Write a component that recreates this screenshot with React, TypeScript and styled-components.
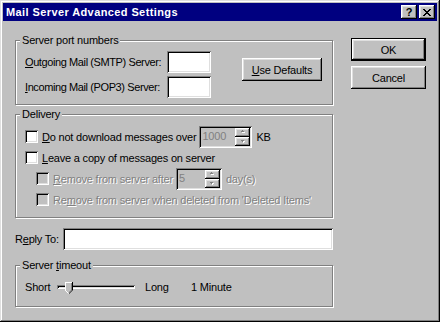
import styled, { createGlobalStyle } from "styled-components";

const GlobalStyle = createGlobalStyle`
  html, body {
    margin: 0;
    padding: 0;
    background: #c0c0c0;
  }
  body {
    font-family: "Liberation Sans", Arial, sans-serif;
    font-size: 11px;
    letter-spacing: -0.2px;
    color: #000;
  }
`;

const raised = `
  box-shadow: inset -1px -1px #000, inset 1px 1px #fff, inset -2px -2px #808080, inset 2px 2px #dfdfdf;
`;

const sunken = `
  box-shadow: inset 1px 1px #808080, inset -1px -1px #fff, inset 2px 2px #000, inset -2px -2px #dfdfdf;
`;

const Window = styled.div`
  width: 440px;
  height: 322px;
  box-sizing: border-box;
  padding: 3px;
  background: #c0c0c0;
  box-shadow: inset -1px -1px #000, inset 1px 1px #dfdfdf, inset -2px -2px #808080, inset 2px 2px #fff;
  display: flex;
  flex-direction: column;
`;

const TitleBar = styled.div`
  height: 18px;
  background: #000080;
  color: #fff;
  display: flex;
  align-items: center;
  padding: 0 2px 0 3px;
`;

const Title = styled.span`
  flex: 1;
  font-weight: bold;
  font-size: 11px;
  letter-spacing: 0.4px;
`;

const TitleButton = styled.div`
  width: 16px;
  height: 14px;
  box-sizing: border-box;
  background: #c0c0c0;
  ${raised}
  color: #000;
  font-weight: bold;
  font-size: 11px;
  letter-spacing: 0;
  line-height: 13px;
  display: flex;
  align-items: center;
  justify-content: center;
  & + & {
    margin-left: 2px;
  }
`;

const Body = styled.div`
  display: flex;
  padding-left: 12px;
`;

const LeftColumn = styled.div`
  width: 318px;
  padding-top: 19px;
  display: flex;
  flex-direction: column;
`;

const RightColumn = styled.div`
  margin-left: 18px;
  padding-top: 17px;
  display: flex;
  flex-direction: column;
  gap: 5px;
`;

const Group = styled.div<{ $h: number; $gap?: number }>`
  height: ${(p) => p.$h}px;
  box-sizing: border-box;
  margin-top: ${(p) => p.$gap ?? 0}px;
  border: 1px solid #808080;
  box-shadow: inset 1px 1px #fff, 1px 1px #fff;
  padding: 0 9px;
  display: flex;
  flex-direction: column;
`;

const Legend = styled.div`
  align-self: flex-start;
  margin: -7px 0 0 -5px;
  padding: 0 2px;
  background: #c0c0c0;
  line-height: 13px;
`;

const U = styled.span`
  text-decoration: underline;
  text-underline-offset: 1px;
`;

const PortArea = styled.div`
  display: flex;
  align-items: flex-start;
  margin-top: 4px;
`;

const PortGrid = styled.div`
  display: grid;
  grid-template-columns: 142px 44px;
  grid-auto-rows: 22px;
  row-gap: 3px;
  align-items: center;
`;

const PortLabel = styled.span`
  white-space: nowrap;
  letter-spacing: -0.4px;
`;

const Field = styled.div<{ $w?: number; $disabled?: boolean }>`
  width: ${(p) => (p.$w ? `${p.$w}px` : "auto")};
  flex: ${(p) => (p.$w ? "none" : 1)};
  height: 22px;
  box-sizing: border-box;
  background: ${(p) => (p.$disabled ? "#c0c0c0" : "#fff")};
  ${sunken}
`;

const Button = styled.div<{ $w: number; $default?: boolean }>`
  width: ${(p) => p.$w}px;
  height: 23px;
  box-sizing: border-box;
  background: #c0c0c0;
  border: ${(p) => (p.$default ? "1px solid #000" : "none")};
  ${raised}
  display: flex;
  align-items: center;
  justify-content: center;
`;

const DefaultsButton = styled(Button)`
  margin: 7px 0 0 31px;
`;

const Rows = styled.div`
  margin-top: 5px;
  display: flex;
  flex-direction: column;
`;

const Row = styled.div<{ $indent?: number }>`
  height: 21px;
  display: flex;
  align-items: center;
  padding-left: ${(p) => p.$indent ?? 0}px;
`;

const Check = styled.div<{ $disabled?: boolean }>`
  width: 13px;
  height: 13px;
  box-sizing: border-box;
  flex: none;
  background: ${(p) => (p.$disabled ? "#c0c0c0" : "#fff")};
  ${sunken}
  margin-right: 4px;
`;

const Label = styled.span<{ $disabled?: boolean }>`
  white-space: nowrap;
  color: ${(p) => (p.$disabled ? "#808080" : "#000")};
  text-shadow: ${(p) => (p.$disabled ? "1px 1px 0 #fff" : "none")};
`;

const Spin = styled(Field)`
  display: flex;
  padding: 2px;
  margin: 0 4px 0 3px;
`;

const SpinValue = styled.span`
  flex: 1;
  padding-left: 1px;
  line-height: 17px;
  color: #808080;
`;

const SpinButtons = styled.div`
  width: 15px;
  display: flex;
  flex-direction: column;
`;

const SpinButton = styled.div`
  flex: 1;
  background: #c0c0c0;
  ${raised}
  display: flex;
  align-items: center;
  justify-content: center;
`;

const ReplyRow = styled.div`
  margin-top: 10px;
  display: flex;
  align-items: center;
`;

const ReplyLabel = styled.span`
  width: 48px;
`;

const TimeoutRow = styled.div`
  margin-top: 5px;
  height: 20px;
  display: flex;
  align-items: center;
`;

const Cell = styled.span<{ $w: number }>`
  width: ${(p) => p.$w}px;
  flex: none;
`;

const Slider = styled.div`
  position: relative;
  width: 78px;
  height: 20px;
  margin-right: 10px;
  display: flex;
  align-items: center;
`;

const Track = styled.div`
  width: 100%;
  height: 4px;
  background: #c0c0c0;
  box-shadow: inset 1px 1px #808080, inset -1px -1px #fff, inset 2px 2px #000, inset -2px -2px #dfdfdf;
`;

const Thumb = styled.svg`
  position: absolute;
  left: 8px;
  top: 5px;
`;

function Arrow({ up }: { up?: boolean }) {
  return (
    <svg width="6" height="4" viewBox="0 0 6 4">
      {up ? (
        <>
          <path d="M2 3h3V2h-1V1h-1v1H2z" fill="#fff" />
          <path d="M1 2h3V1h-1V0h-1v1H1z" fill="#808080" />
        </>
      ) : (
        <>
          <path d="M2 2h3v1h-1v1h-1V3H2z" fill="#fff" />
          <path d="M1 1h3v1h-1v1h-1V2H1z" fill="#808080" />
        </>
      )}
    </svg>
  );
}

function Spinner({ width, value }: { width: number; value: string }) {
  return (
    <Spin $w={width} $disabled>
      <SpinValue>{value}</SpinValue>
      <SpinButtons>
        <SpinButton>
          <Arrow up />
        </SpinButton>
        <SpinButton>
          <Arrow />
        </SpinButton>
      </SpinButtons>
    </Spin>
  );
}

export default function App() {
  return (
    <>
      <GlobalStyle />
      <Window>
        <TitleBar>
          <Title>Mail Server Advanced Settings</Title>
          <TitleButton>?</TitleButton>
          <TitleButton>
            <svg width="8" height="7" viewBox="0 0 8 7">
              <path
                d="M0 0h2v1h1v1h2V1h1V0h2v1H7v1H6v1H5v1h1v1h1v1h1v1H6V6H5V5H3v1H2v1H0V6h1V5h1V4h1V3H2V2H1V1H0z"
                fill="#000"
              />
            </svg>
          </TitleButton>
        </TitleBar>
        <Body>
          <LeftColumn>
            <Group $h={65}>
              <Legend>Server port numbers</Legend>
              <PortArea>
                <PortGrid>
                  <PortLabel>
                    <U>O</U>utgoing Mail (SMTP) Server:
                  </PortLabel>
                  <Field $w={44} />
                  <PortLabel>
                    <U>I</U>ncoming Mail (POP3) Server:
                  </PortLabel>
                  <Field $w={44} />
                </PortGrid>
                <DefaultsButton $w={80}>
                  <span>
                    <U>U</U>se Defaults
                  </span>
                </DefaultsButton>
              </PortArea>
            </Group>

            <Group $h={104} $gap={9}>
              <Legend>Delivery</Legend>
              <Rows>
                <Row>
                  <Check />
                  <Label>
                    <U>D</U>o not download messages over
                  </Label>
                  <Spinner width={53} value="1000" />
                  <Label>KB</Label>
                </Row>
                <Row>
                  <Check />
                  <Label>
                    <U>L</U>eave a copy of messages on server
                  </Label>
                </Row>
                <Row $indent={11}>
                  <Check $disabled />
                  <Label $disabled>
                    <U>R</U>emove from server after
                  </Label>
                  <Spinner width={46} value="5" />
                  <Label $disabled>day(s)</Label>
                </Row>
                <Row $indent={11}>
                  <Check $disabled />
                  <Label $disabled>
                    Re<U>m</U>ove from server when deleted from 'Deleted Items'
                  </Label>
                </Row>
              </Rows>
            </Group>

            <ReplyRow>
              <ReplyLabel>
                R<U>e</U>ply To:
              </ReplyLabel>
              <Field />
            </ReplyRow>

            <Group $h={42} $gap={15}>
              <Legend>
                Server <U>t</U>imeout
              </Legend>
              <TimeoutRow>
                <Cell $w={32}>Short</Cell>
                <Slider>
                  <Track />
                  <Thumb width="8" height="12" viewBox="0 0 8 12">
                    <path d="M0 0h8v8l-4 4-4-4z" fill="#c0c0c0" />
                    <path d="M0 0h7v1H1v7H0z" fill="#fff" />
                    <path d="M7 0h1v8l-4 4v-1l3-3z" fill="#000" />
                    <path d="M6 1h1v7l-3 3v-1l2-2z" fill="#808080" />
                    <path d="M0 8l3.5 3.5" stroke="#fff" strokeWidth="1" />
                  </Thumb>
                </Slider>
                <Cell $w={46}>Long</Cell>
                <span>1 Minute</span>
              </TimeoutRow>
            </Group>
          </LeftColumn>

          <RightColumn>
            <Button $w={75} $default>
              OK
            </Button>
            <Button $w={75}>Cancel</Button>
          </RightColumn>
        </Body>
      </Window>
    </>
  );
}
